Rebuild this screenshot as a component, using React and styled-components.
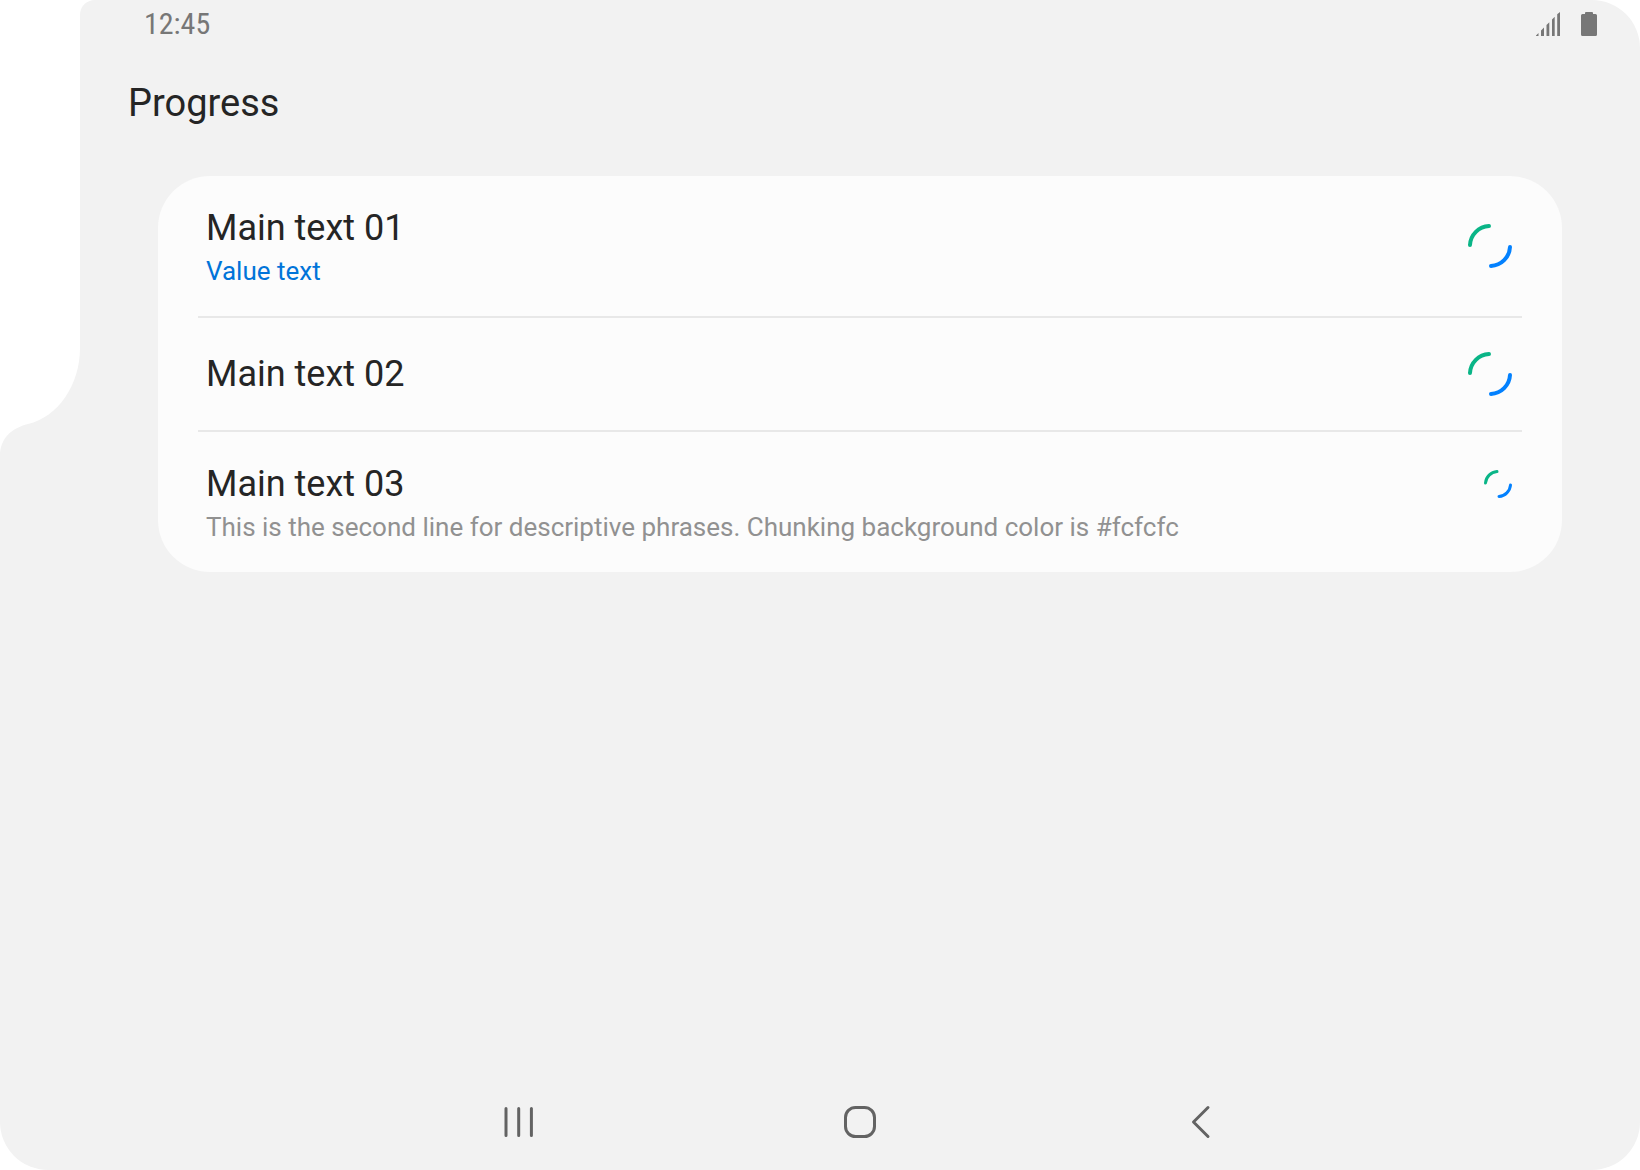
import React from "react";
import styled, { createGlobalStyle } from "styled-components";

const GlobalStyle = createGlobalStyle`
  * { box-sizing: border-box; }
  body {
    margin: 0;
    background: #ffffff;
    font-family: Roboto, sans-serif;
    color: #252525;
  }
`;

const Screen = styled.div`
  position: relative;
  display: flex;
  flex-direction: column;
  min-height: 100vh;
  padding-left: 80px;
  background: #f2f2f2;
  border-radius: 0 48px 48px 48px;
  overflow: hidden;
`;

const Cutout = styled.svg`
  position: absolute;
  top: 0;
  left: 0;
  fill: #ffffff;
`;

const StatusBar = styled.header`
  display: flex;
  align-items: center;
  justify-content: space-between;
  height: 48px;
  padding: 0 43px 0 64px;
  color: #777777;
`;

const Clock = styled.time`
  font-family: "Roboto Condensed", Roboto, sans-serif;
  font-size: 30px;
  line-height: 48px;
`;

const StatusIcons = styled.div`
  display: flex;
  align-items: center;
  gap: 20px;
  svg { display: block; fill: currentColor; }
`;

const AppBar = styled.div`
  display: flex;
  align-items: center;
  height: 110px;
  padding: 0 48px;
`;

const Title = styled.h1`
  margin: 0;
  font-size: 38px;
  font-weight: 400;
  line-height: 48px;
`;

const Content = styled.main`
  flex: 1;
  padding: 18px 78px;
`;

const Card = styled.ul`
  margin: 0;
  padding: 0 40px;
  list-style: none;
  background: #fcfcfc;
  border-radius: 52px;
`;

const Row = styled.li`
  display: flex;
  align-items: ${(p) => (p.$align === "top" ? "flex-start" : "center")};
  justify-content: space-between;
  gap: 24px;
  padding: ${(p) => (p.$single ? "31px 8px" : "27px 8px")};
  & + & { border-top: 2px solid #e8e8e8; }
`;

const MainText = styled.div`
  font-size: 36px;
  line-height: 50px;
`;

const SubText = styled.div`
  font-size: 26px;
  line-height: 36px;
  color: ${(p) => (p.$value ? "#0074d9" : "#919191")};
`;

const SpinnerSlot = styled.div`
  display: flex;
  align-items: center;
  flex: none;
  height: 50px;
`;

const NavBar = styled.nav`
  display: grid;
  grid-template-columns: repeat(3, 1fr);
  align-self: center;
  width: 100%;
  max-width: 1026px;
  height: 96px;
`;

const NavButton = styled.button`
  display: flex;
  align-items: center;
  justify-content: center;
  padding: 0;
  border: 0;
  background: none;
  color: #636363;
  cursor: pointer;
  svg {
    fill: none;
    stroke: currentColor;
    stroke-width: 3;
    stroke-linecap: round;
    stroke-linejoin: round;
  }
`;

function Spinner({ size, radius, stroke, label }) {
  const c = size / 2;
  return (
    <SpinnerSlot role="progressbar" aria-label={label}>
      <svg width={size} height={size} fill="none" strokeWidth={stroke} strokeLinecap="round">
        <path d={`M${c - radius} ${c - 1}A${radius} ${radius} 0 0 1 ${c - 1} ${c - radius}`} stroke="#0ab587" />
        <path d={`M${c + radius} ${c + 1}A${radius} ${radius} 0 0 1 ${c + 1} ${c + radius}`} stroke="#0381fe" />
      </svg>
    </SpinnerSlot>
  );
}

const items = [
  { text: "Main text 01", sub: "Value text", value: true },
  { text: "Main text 02" },
  {
    text: "Main text 03",
    sub: "This is the second line for descriptive phrases. Chunking background color is #fcfcfc",
    small: true,
  },
];

export default function App() {
  return (
    <>
      <GlobalStyle />
      <Screen>
        <Cutout width="96" height="460" aria-hidden="true">
          <path d="M0 0H95C86.500 0 80 6.500 80 15V348C80 385 58 417 28 424C12 428 0 438 0 456Z" />
        </Cutout>
        <StatusBar>
          <Clock>12:45</Clock>
          <StatusIcons>
            <svg width="25" height="24" aria-label="Signal">
              <path d="M0 24V23.500L2.500 21V24ZM5 24V18.500L8 15.500V24ZM10.500 24V13L13.300 10.200V24ZM16 24V7.500L18.700 4.800V24ZM21.200 24V2.200L24 0V24Z" />
            </svg>
            <svg width="16" height="24" aria-label="Battery">
              <path d="M4 1Q4 0 5 0H11Q12 0 12 1V2H14.500Q16 2 16 3.500V22.500Q16 24 14.500 24H1.500Q0 24 0 22.500V3.500Q0 2 1.500 2H4Z" />
            </svg>
          </StatusIcons>
        </StatusBar>
        <AppBar>
          <Title>Progress</Title>
        </AppBar>
        <Content>
          <Card>
            {items.map((item) => (
              <Row key={item.text} $single={!item.sub} $align={item.small ? "top" : "center"}>
                <div>
                  <MainText>{item.text}</MainText>
                  {item.sub && <SubText $value={item.value}>{item.sub}</SubText>}
                </div>
                {item.small ? (
                  <Spinner size={32} radius={12.5} stroke={3} label={item.text} />
                ) : (
                  <Spinner size={48} radius={20} stroke={4} label={item.text} />
                )}
              </Row>
            ))}
          </Card>
        </Content>
        <NavBar aria-label="System navigation">
          <NavButton type="button" aria-label="Recent apps">
            <svg width="36" height="36">
              <path d="M6 4.500V31.500M18.700 4.500V31.500M31.400 4.500V31.500" />
            </svg>
          </NavButton>
          <NavButton type="button" aria-label="Home">
            <svg width="36" height="36">
              <rect x="3.500" y="3.500" width="29" height="29" rx="10" />
            </svg>
          </NavButton>
          <NavButton type="button" aria-label="Back">
            <svg width="36" height="36">
              <path d="M24 3.500L9.500 18L24 32.500" />
            </svg>
          </NavButton>
        </NavBar>
      </Screen>
    </>
  );
}
